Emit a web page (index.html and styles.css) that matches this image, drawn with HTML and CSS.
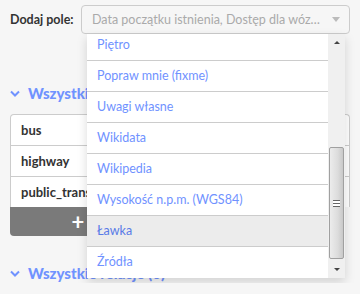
FILE: index.html
```html
<!DOCTYPE html>
<html lang="pl">
<head>
  <meta charset="UTF-8" />
  <meta name="viewport" content="width=device-width, initial-scale=1.0">
  <title>Edytor tagów</title>
  <link rel="stylesheet" href="styles.css">
</head>
<body>
  <div class="preset-add">
    <label class="preset-add-label">Dodaj pole:</label>
    <div class="combobox">
      <span class="combo-placeholder">Data początku istnienia, Dostęp dla wózków inwalidzkich</span>
      <span class="combo-caret"></span>

      <!-- Lista podpowiedzi -->
      <div class="combo-menu">
        <div class="combo-list">
          <div class="combo-option first">Piętro</div>
          <div class="combo-option">Popraw mnie (fixme)</div>
          <div class="combo-option">Uwagi własne</div>
          <div class="combo-option">Wikidata</div>
          <div class="combo-option">Wikipedia</div>
          <div class="combo-option">Wysokość n.p.m. (WGS84)</div>
          <div class="combo-option active">Ławka</div>
          <div class="combo-option">Źródła</div>
        </div>
        <div class="scrollbar">
          <div class="scroll-btn"><span class="arrow-up"></span></div>
          <div class="scroll-track">
            <div class="scroll-thumb"><span class="grip"></span></div>
          </div>
          <div class="scroll-btn"><span class="arrow-down"></span></div>
        </div>
      </div>
    </div>
  </div>

  <h3 class="section-head">
    <svg class="chevron" width="10" height="7" viewBox="0 0 10 7"><path d="M1 1.5 L5 5.5 L9 1.5" fill="none" stroke="currentColor" stroke-width="2"/></svg>
    Wszystkie tagi (3)
  </h3>

  <div class="tag-list">
    <div class="tag-row">
      <div class="tag-key">bus</div>
      <div class="tag-value">yes</div>
      <div class="tag-remove"></div>
    </div>
    <div class="tag-row">
      <div class="tag-key">highway</div>
      <div class="tag-value">bus_stop</div>
      <div class="tag-remove"></div>
    </div>
    <div class="tag-row">
      <div class="tag-key">public_transport</div>
      <div class="tag-value">platform</div>
      <div class="tag-remove"></div>
    </div>
  </div>
  <button class="add-tag">+</button>

  <h3 class="section-head second">
    <svg class="chevron" width="10" height="7" viewBox="0 0 10 7"><path d="M1 1.5 L5 5.5 L9 1.5" fill="none" stroke="currentColor" stroke-width="2"/></svg>
    Wszystkie relacje (0)
  </h3>
</body>
</html>
```

FILE: styles.css
```css
body {
  margin: 0;
  font-family: Lato, 'Open Sans', sans-serif;
  font-size: 13px;
  background: #f6f6f6;
  color: #333;
  overflow: hidden;
}
.preset-add {
  display: flex;
  align-items: center;
  padding: 5px 10px 5px 10px;
}
.preset-add-label {
  flex-shrink: 0;
  width: 71px;
  font-weight: bold;
  font-size: 12.5px;
  white-space: nowrap;
}
.combobox {
  flex: 1;
  min-width: 0;
  position: relative;
  height: 27px;
  border: 1px solid #ccc;
  border-radius: 4px;
  background: #f6f6f6;
  display: flex;
  align-items: center;
  padding: 0 9px 0 10px;
}
.combo-placeholder {
  flex: 1;
  min-width: 0;
  color: #aaa;
  white-space: nowrap;
  overflow: hidden;
  text-overflow: ellipsis;
  font-size: 12.5px;
}
.combo-caret {
  margin-left: 10px;
  border-left: 4px solid transparent;
  border-right: 4px solid transparent;
  border-top: 5px solid #bbb;
}
/* Lista rozwijana nad trescia */
.combo-menu {
  position: absolute;
  top: 28px;
  left: 5px;
  right: 4px;
  height: 244px;
  background: #fff;
  display: flex;
  box-shadow: 0 4px 10px rgba(0, 0, 0, 0.15);
  z-index: 10;
}
.combo-list {
  flex: 1;
  overflow: hidden;
}
.combo-option {
  height: 30px;
  line-height: 30px;
  border-bottom: 1px solid #ccc;
  padding-left: 10px;
  color: #7092ff;
  font-size: 12.5px;
  white-space: nowrap;
}
.combo-option.first {
  margin-top: -4px;
}
.combo-option.active {
  background: #ececec;
  color: #597be7;
}
.combo-option:last-child {
  border-bottom: none;
}
.scrollbar {
  width: 17px;
  background: #f0f0f0;
  display: flex;
  flex-direction: column;
}
.scroll-btn {
  height: 17px;
  display: flex;
  align-items: center;
  justify-content: center;
}
.arrow-up {
  border-left: 3px solid transparent;
  border-right: 3px solid transparent;
  border-bottom: 3px solid #444;
}
.arrow-down {
  border-left: 3px solid transparent;
  border-right: 3px solid transparent;
  border-top: 3px solid #444;
}
.scroll-track {
  flex: 1;
  display: flex;
  flex-direction: column;
  justify-content: flex-end;
  padding: 0 1px 2px 1px;
}
.scroll-thumb {
  height: 112px;
  border: 1px solid #a0a0a0;
  border-radius: 2px;
  background: linear-gradient(90deg, #ececec, #dcdcdc 60%, #c8c8c8);
  display: flex;
  align-items: center;
  justify-content: center;
  box-sizing: border-box;
}
.grip {
  width: 7px;
  height: 5px;
  border-top: 1px solid #666;
  border-bottom: 1px solid #666;
  background: linear-gradient(#fff 0, #fff 2px, #666 2px, #666 3px, #fff 3px);
}
.section-head {
  margin: 44px 10px 0 10px;
  height: 20px;
  line-height: 20px;
  font-size: 15px;
  font-weight: 900;
  color: #7092ff;
  display: flex;
  align-items: center;
  gap: 8px;
  white-space: nowrap;
}
.section-head.second {
  margin-top: 27px;
}
.chevron {
  color: #7092ff;
}
.tag-list {
  margin: 11px 10px 0 10px;
  border: 1px solid #ccc;
  border-bottom: none;
  border-radius: 4px 4px 0 0;
  background: #fff;
}
.tag-row {
  display: flex;
  height: 30px;
  border-top: 1px solid #ccc;
}
.tag-row:first-child {
  border-top: none;
}
.tag-key {
  width: 40%;
  padding-left: 10px;
  line-height: 30px;
  font-weight: bold;
  font-size: 13px;
  white-space: nowrap;
  overflow: hidden;
  box-sizing: border-box;
}
.tag-value {
  flex: 1;
  border-left: 1px solid #ccc;
  padding-left: 10px;
  line-height: 30px;
}
.tag-remove {
  width: 30px;
  border-left: 1px solid #ccc;
}
.add-tag {
  display: block;
  margin-left: 10px;
  width: 136px;
  height: 29px;
  border: none;
  border-radius: 0 0 0 4px;
  background: #7a7a7a;
  color: #fff;
  font-size: 22px;
  font-weight: bold;
  line-height: 29px;
  padding: 0;
  font-family: Lato, sans-serif;
}
```
